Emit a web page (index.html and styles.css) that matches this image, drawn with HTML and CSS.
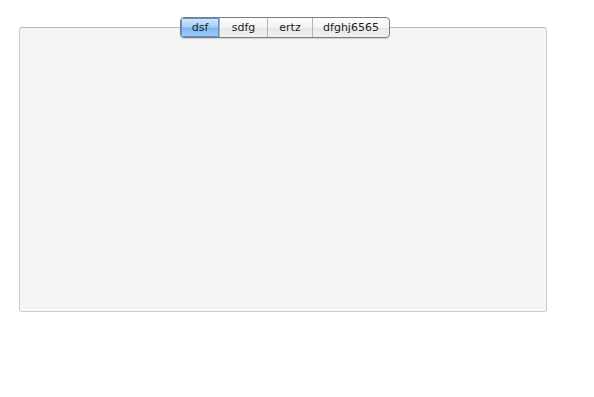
FILE: index.html
```html
<!DOCTYPE html>
<html>
<head>
<meta charset="utf-8">
<link rel="stylesheet" href="styles.css">
</head>
<body>
<div class="frame">
  <div class="tabs">
    <div class="tab sel">dsf</div>
    <div class="tab">sdfg</div>
    <div class="tab">ertz</div>
    <div class="tab last">dfghj6565</div>
  </div>
  <div class="panel"></div>
</div>
</body>
</html>
```
FILE: styles.css
```css
html, body { margin: 0; padding: 0; background: #fff; }
body { font-family: "DejaVu Sans", "Liberation Sans", sans-serif; }
.frame {
  width: 528px;
  margin-left: 19px;
  padding-top: 17px;
}
.tabs {
  position: relative;
  z-index: 1;
  display: flex;
  width: 210px;
  margin-left: 161px;
  height: 21px;
  box-sizing: border-box;
  border: 1px solid #7d7d7d;
  border-radius: 4px;
  background: linear-gradient(#fdfdfd, #f3f3f3 50%, #e6e6e6 51%, #f1f1f1);
  box-shadow: 0 1px 1px rgba(0,0,0,0.15);
  overflow: hidden;
}
.tab {
  font-size: 11px;
  color: #1a1a1a;
  line-height: 19px;
  text-align: center;
  border-left: 1px solid #b4b4b4;
  box-sizing: border-box;
}
.tab:nth-child(1) { width: 38px; border-left: none; }
.tab:nth-child(2) { width: 48px; }
.tab:nth-child(3) { width: 45px; }
.tab:nth-child(4) { flex: 1; }
.tab.sel {
  background: linear-gradient(#d4e9fc, #a9d0f5 45%, #7fb8ef 55%, #9fd0fb);
  box-shadow: inset 0 0 0 1px #5b8fd0;
  color: #0e1e33;
}
.panel {
  margin-top: -11px;
  height: 285px;
  box-sizing: border-box;
  background: #f5f5f5;
  border: 1px solid #cdcdcd;
  border-top-color: #b9b9b9;
  border-radius: 3px;
  box-shadow: inset 0 -2px 0 #fafafa;
}
```
